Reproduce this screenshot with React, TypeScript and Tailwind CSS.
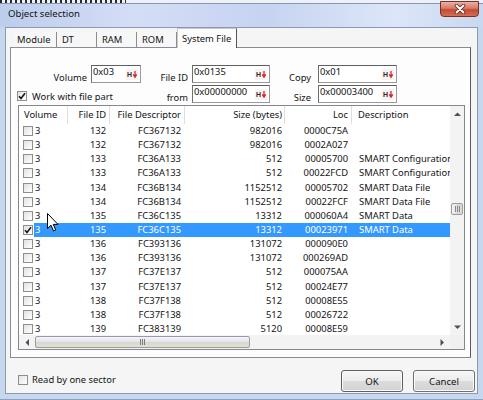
import React from 'react';

type Row = { id: string; desc: string; size: string; loc: string; info?: string; checked?: boolean };

const ROWS: Row[] = [
  { id: '132', desc: 'FC367132', size: '982016', loc: '0000C75A' },
  { id: '132', desc: 'FC367132', size: '982016', loc: '0002A027' },
  { id: '133', desc: 'FC36A133', size: '512', loc: '00005700', info: 'SMART Configuration' },
  { id: '133', desc: 'FC36A133', size: '512', loc: '00022FCD', info: 'SMART Configuration' },
  { id: '134', desc: 'FC36B134', size: '1152512', loc: '00005702', info: 'SMART Data File' },
  { id: '134', desc: 'FC36B134', size: '1152512', loc: '00022FCF', info: 'SMART Data File' },
  { id: '135', desc: 'FC36C135', size: '13312', loc: '000060A4', info: 'SMART Data' },
  { id: '135', desc: 'FC36C135', size: '13312', loc: '00023971', info: 'SMART Data', checked: true },
  { id: '136', desc: 'FC393136', size: '131072', loc: '000090E0' },
  { id: '136', desc: 'FC393136', size: '131072', loc: '000269AD' },
  { id: '137', desc: 'FC37E137', size: '512', loc: '000075AA' },
  { id: '137', desc: 'FC37E137', size: '512', loc: '00024E77' },
  { id: '138', desc: 'FC37F138', size: '512', loc: '00008E55' },
  { id: '138', desc: 'FC37F138', size: '512', loc: '00026722' },
  { id: '139', desc: 'FC383139', size: '5120', loc: '00008E59' },
];

function Check({ checked }: { checked?: boolean }) {
  return (
    <span className="w-[10px] h-[10px] shrink-0 border border-[#8e8f8f] bg-[linear-gradient(135deg,#e2e2e2,#ffffff)] flex items-center justify-center">
      {checked && (
        <svg width="8" height="8" viewBox="0 0 8 8">
          <path d="M1 4.2 L3 6.4 L7 1.2" fill="none" stroke="#1a1a1a" strokeWidth="1.6" />
        </svg>
      )}
    </span>
  );
}

// small "H↓" hex toggle at the right of each field
function HexBtn() {
  return (
    <span className="ml-auto mr-[2px] self-center w-[12px] h-[11px] flex items-center justify-center gap-[1px] bg-[#f4f4f4]">
      <span className="text-[7px] font-bold leading-none text-[#4a1c1c] font-['Liberation_Sans',sans-serif]">H</span>
      <svg width="4" height="7" viewBox="0 0 4 7">
        <path d="M2 0 V5 M0.3 3.4 L2 6.2 L3.7 3.4" stroke="#e02424" strokeWidth="1.3" fill="none" />
      </svg>
    </span>
  );
}

function HexInput({ value }: { value: string }) {
  return (
    <div className="h-[18px] border border-[#9a9a9a] border-t-[#5e5e5e] border-l-[#6e6e6e] bg-white flex items-start pl-[1px]">
      <span className="leading-[12px]">{value}</span>
      <HexBtn />
    </div>
  );
}

function Label({ text }: { text: string }) {
  return <div className="flex justify-end items-start pt-[6px] pr-[4px] leading-[13px]">{text}</div>;
}

function Tab({ label, w }: { label: string; w: string }) {
  return (
    <div className={`${w} h-[15px] border-r border-[#8c8c8c] bg-[#f7f7f7] pl-[5px] pt-[1px] leading-[13px]`}>{label}</div>
  );
}

function Tri({ dir }: { dir: 'up' | 'down' | 'left' | 'right' }) {
  const d = {
    up: 'M0 4 L3.5 0.5 L7 4 Z',
    down: 'M0 0.5 L3.5 4 L7 0.5 Z',
    left: 'M4 0 L0.5 3.5 L4 7 Z',
    right: 'M0.5 0 L4 3.5 L0.5 7 Z',
  }[dir];
  const vertical = dir === 'up' || dir === 'down';
  return (
    <svg width={vertical ? 7 : 5} height={vertical ? 5 : 7} viewBox={vertical ? '0 0 7 5' : '0 0 5 7'}>
      <path d={d} fill="#505050" />
    </svg>
  );
}

export default function App() {
  return (
    <div className="relative w-[483px] h-[400px] overflow-hidden bg-[#c6d8ee] font-['Noto_Sans',sans-serif] text-[9.4px] leading-[13px] text-[#141414] flex flex-col">
      {/* Title bar */}
      <div className="h-[27px] flex flex-col bg-[linear-gradient(90deg,#bccdec,#d4ddf6_28%,#c6d4f0_55%,#dde6f8_82%,#c8d8f0)]">
        <div className="h-[3px] flex bg-[#eef1f7]">
          <div className="w-[126px] bg-[repeating-linear-gradient(90deg,#2a2a2a_0_2px,transparent_2px_5px)]" />
        </div>
        <div className="flex-1 flex items-start border-t border-[#8797b0]">
          <span className="pl-[8px] pt-[3px] text-[9.6px]">Object selection</span>
          <div className="ml-auto mr-[4px] -mt-[3px] w-[39px] h-[16px] rounded-b-[4px] border border-[#7a2f28] bg-[linear-gradient(180deg,#eab0a2,#d97a66_45%,#c44a34_55%,#d46e52)] flex items-center justify-center">
            <svg width="12" height="10" viewBox="0 0 12 10">
              <path d="M2.5 1.5 L9.5 8.5 M9.5 1.5 L2.5 8.5" stroke="#5a2018" strokeWidth="3.6" strokeLinecap="round" />
              <path d="M2.5 1.5 L9.5 8.5 M9.5 1.5 L2.5 8.5" stroke="#ffffff" strokeWidth="2" strokeLinecap="round" />
            </svg>
          </div>
        </div>
      </div>

      {/* Client area */}
      <div className="ml-[5px] w-[473px] h-[367px] border border-[#8b9ab3] bg-[#f5f5f5] flex flex-col">
        {/* Tabs */}
        <div className="h-[19px] flex items-end pl-[8px]">
          <div className="w-[43px] h-[15px] border-r border-[#8c8c8c] bg-[#f7f7f7] pl-[3px] pt-[1px] leading-[13px]">Module</div>
          <Tab label="DT" w="w-[40px]" />
          <Tab label="RAM" w="w-[40px]" />
          <Tab label="ROM" w="w-[40px]" />
          <div className="relative z-10 w-[60px] h-[20px] -mb-[1px] bg-[#fdfdfd] border border-b-0 border-[#c8c8c8] border-r-[#555] pl-[4px] pt-[3px] leading-[13px]">
            System File
          </div>
        </div>

        {/* Tab panel */}
        <div className="ml-[4px] w-[461px] h-[311px] border border-[#898c95] border-r-[#5a5a5a] bg-[#fdfdfd] flex flex-col">
          <div className="mt-[17px] grid grid-cols-[80px_50px_51px_78px_48px_79px] grid-rows-[18px_18px] gap-y-[2px]">
            <Label text="Volume" />
            <HexInput value="0x03" />
            <Label text="File ID" />
            <HexInput value="0x0135" />
            <div className="flex justify-end items-start pt-[6px] pr-[7px]">Copy</div>
            <HexInput value="0x01" />

            <div className="col-span-2 flex items-start pt-[5px] pl-[6px] gap-[5px]">
              <span className="mt-[1px]"><Check checked /></span>
              <span>Work with file part</span>
            </div>
            <Label text="from" />
            <HexInput value="0x00000000" />
            <div className="flex justify-end items-start pt-[6px] pr-[7px]">Size</div>
            <HexInput value="0x00003400" />
          </div>

          {/* List view */}
          <div className="ml-[7px] mt-[2px] w-[447px] h-[245px] border border-[#828790] bg-white flex">
            <div className="w-[431px] flex flex-col">
              <div className="h-[18px] flex shrink-0">
                <div className="w-[49px] border-r border-[#dedede] pl-[5px] pt-[2px]">Volume</div>
                <div className="w-[42px] border-r border-[#dedede] text-right pr-[3px] pt-[2px]">File ID</div>
                <div className="w-[75px] border-r border-[#dedede] text-right pr-[3px] pt-[2px]">File Descriptor</div>
                <div className="w-[100px] border-r border-[#dedede] text-right pr-[2px] pt-[2px]">Size (bytes)</div>
                <div className="w-[67px] border-r border-[#dedede] text-right pr-[3px] pt-[2px]">Loc</div>
                <div className="w-[98px] pl-[6px] pt-[2px] whitespace-nowrap overflow-hidden">Description</div>
              </div>

              <div className="flex-1 overflow-hidden">
                {ROWS.map((r, i) => (
                  <div key={i} className="h-[14.15px] flex leading-[14px]">
                    <div className="w-[15px] shrink-0 pl-[4px] flex items-center">
                      <Check checked={r.checked} />
                    </div>
                    <div className={`flex flex-1 whitespace-nowrap ${r.checked ? 'bg-[#3399ff] text-white' : ''}`}>
                      <span className="w-[34px] pl-[1px]">3</span>
                      <span className="w-[42px] text-right pr-[4px]">{r.id}</span>
                      <span className="w-[75px] text-right pr-[4px]">{r.desc}</span>
                      <span className="w-[100px] text-right pr-[3px]">{r.size}</span>
                      <span className="w-[67px] text-right pr-[4px]">{r.loc}</span>
                      <span className="w-[98px] pl-[7px] overflow-hidden">{r.info ?? ''}</span>
                    </div>
                  </div>
                ))}
              </div>

              {/* Horizontal scrollbar */}
              <div className="h-[14px] shrink-0 flex items-center bg-[#f3f3f3]">
                <div className="w-[16px] flex justify-center"><Tri dir="left" /></div>
                <div className="w-[215px] h-[12px] rounded-[2px] border border-[#9c9c9c] bg-[linear-gradient(180deg,#f4f4fc,#e2e2f2_50%,#d8d8cc_52%,#e0e0d4)] flex items-center justify-center gap-[1px]">
                  <span className="w-[1px] h-[6px] bg-[#7a7a7a]" />
                  <span className="w-[1px] h-[6px] bg-[#7a7a7a]" />
                  <span className="w-[1px] h-[6px] bg-[#7a7a7a]" />
                </div>
                <div className="flex-1" />
                <div className="w-[16px] flex justify-center"><Tri dir="right" /></div>
              </div>
            </div>

            {/* Vertical scrollbar */}
            <div className="w-[14px] flex flex-col bg-[#f3f3f3]">
              <div className="h-[16px] flex items-center justify-center"><Tri dir="up" /></div>
              <div className="flex-1 flex flex-col">
                <div className="mt-[81px] mx-[1px] h-[12px] rounded-[2px] border border-[#9c9c9c] bg-[linear-gradient(90deg,#f4f4f4,#e0e0e0_50%,#d4d4d4_52%,#dedede)] flex items-center justify-center gap-[1px]">
                  <span className="w-[1px] h-[6px] bg-[#8a8a8a]" />
                  <span className="w-[1px] h-[6px] bg-[#8a8a8a]" />
                  <span className="w-[1px] h-[6px] bg-[#8a8a8a]" />
                </div>
              </div>
              <div className="h-[16px] flex items-center justify-center"><Tri dir="down" /></div>
              <div className="h-[14px] bg-[#f0f0f0]" />
            </div>
          </div>
        </div>

        {/* Bottom row */}
        <div className="mt-[12px] h-[22px] flex items-center">
          <div className="pl-[12px] mb-[3px] flex items-center gap-[4px]">
            <Check />
            <span>Read by one sector</span>
          </div>
          <button className="ml-auto w-[62px] h-[22px] rounded-[3px] border border-[#5f5f5f] bg-[linear-gradient(180deg,#f6f6f6,#ececec_50%,#dcdcdc_52%,#d2d2d2)] shadow-[inset_0_0_0_1px_#fbfbfb] text-[9.6px]">
            OK
          </button>
          <button className="ml-[10px] mr-[2px] w-[62px] h-[22px] rounded-[3px] border border-[#707070] bg-[linear-gradient(180deg,#f6f6f6,#ececec_50%,#dcdcdc_52%,#d2d2d2)] shadow-[inset_0_0_0_1px_#fbfbfb] text-[9.6px]">
            Cancel
          </button>
        </div>
      </div>

      {/* Bottom frame */}
      <div className="flex-1 border-b border-[#8fa1bb]" />

      {/* Mouse pointer over the list */}
      <svg className="absolute left-[47px] top-[213px]" width="12" height="19" viewBox="0 0 12 19">
        <path d="M0.5 0.5 L0.5 15.5 L4 12.2 L6.5 18 L8.7 17 L6.3 11.4 L11 11.4 Z" fill="#fff" stroke="#000" strokeWidth="1" strokeLinejoin="round" />
      </svg>
    </div>
  );
}
